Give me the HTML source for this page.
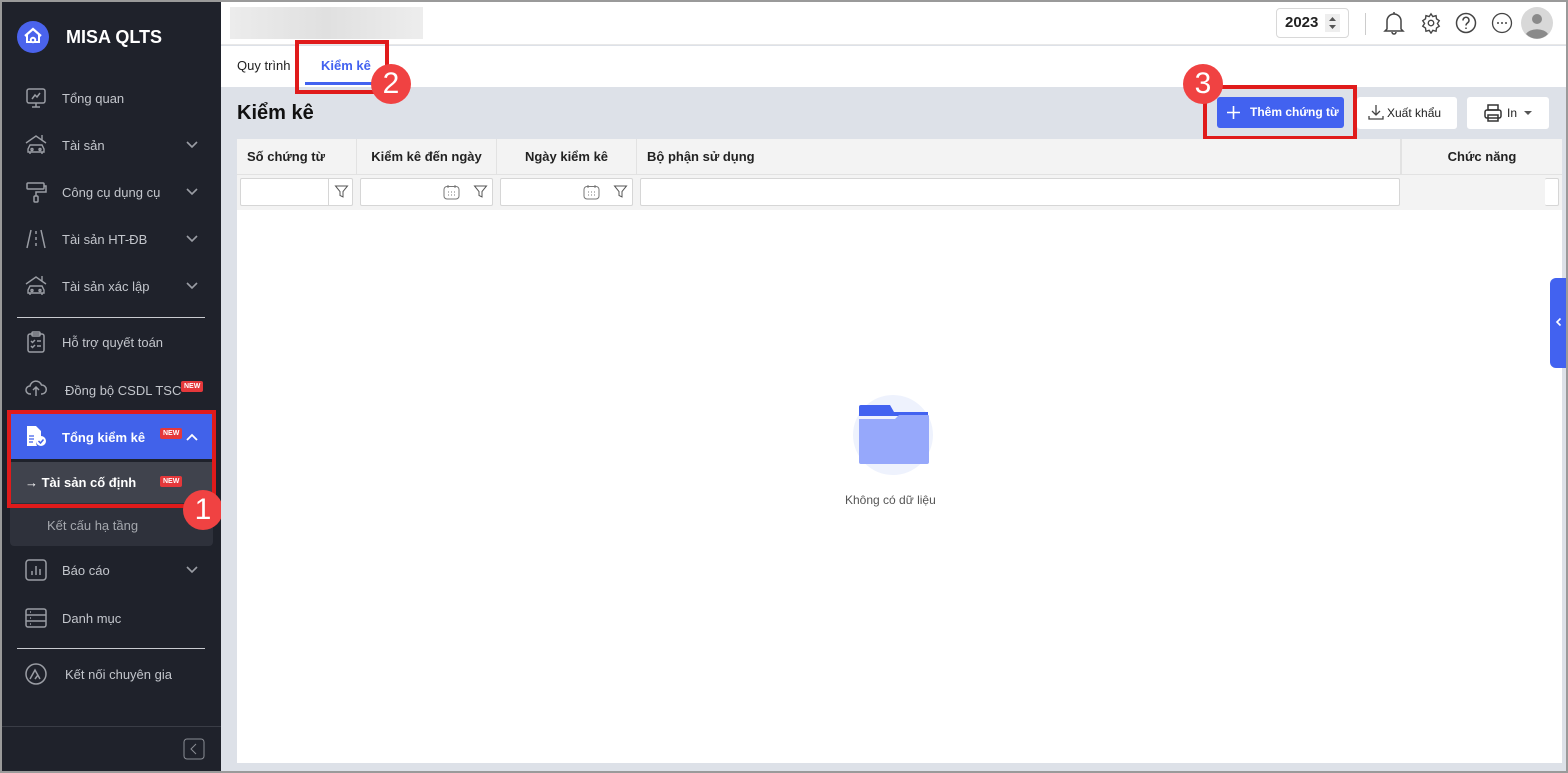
<!DOCTYPE html>
<html><head><meta charset="utf-8"><style>
*{box-sizing:border-box;margin:0;padding:0}
body{width:1568px;height:773px;overflow:hidden;background:#9a9a9a;font-family:"Liberation Sans",Arial,sans-serif;position:relative}
.a{position:absolute}
#sb{left:2px;top:2px;width:219px;height:769px;background:#1f222b}
.mi{position:absolute;left:62px;color:#c3c6cc;font-size:13px;line-height:16px}
.ic{position:absolute;left:24px;width:24px;height:24px}
.chev{position:absolute;left:186px;width:12px;height:8px}
.new{position:absolute;background:#e5383b;color:#fff;font-size:7px;font-weight:bold;padding:1px 3px;border-radius:2px;line-height:9px}
.redbox{position:absolute;border:4px solid #e01b1b}
.num{position:absolute;width:40px;height:40px;border-radius:50%;background:#f04242;color:#fff;font-size:30px;text-align:center;line-height:40px}
.th{position:absolute;top:139px;height:35px;line-height:35px;font-size:13px;font-weight:bold;color:#222;border-right:1px solid #e2e2e2}
.inp{position:absolute;top:178px;height:28px;background:#fff;border:1px solid #d6d6d6;border-radius:2px}
</style></head><body>
<div id="sb" class="a">
</div>
<!-- logo -->
<svg class="a" style="left:17px;top:21px" width="32" height="32" viewBox="0 0 32 32"><circle cx="16" cy="16" r="16" fill="#4a63ec"/><path d="M8 15 L16 8 L24 15" stroke="#fff" stroke-width="2.2" fill="none"/><path d="M10 13v8h12v-8" stroke="#fff" stroke-width="2" fill="none"/><circle cx="16" cy="19" r="3.2" fill="#fff"/><circle cx="16" cy="19" r="1.3" fill="#4a63ec"/></svg>
<div class="a" style="left:66px;top:27px;color:#fff;font-size:18px;font-weight:bold">MISA QLTS</div>

<svg class="ic" style="top:86px" viewBox="0 0 24 24" fill="none" stroke="#9a9da4" stroke-width="1.5"><rect x="3" y="3" width="18" height="14" rx="2"/><path d="M8 13l3-4 2 2 3-4M12 17v4M8 21h8"/></svg>
<div class="mi" style="top:91px">Tổng quan</div>
<svg class="ic" style="top:133px" viewBox="0 0 24 24" fill="none" stroke="#9a9da4" stroke-width="1.4"><path d="M2 10l10-7 10 7M18 2v5"/><path d="M4 19v-3l2-4h12l2 4v3zM6 19v2M18 19v2"/><circle cx="8" cy="16.5" r="1"/><circle cx="16" cy="16.5" r="1"/></svg>
<div class="mi" style="top:138px">Tài sản</div>
<svg class="ic" style="top:180px" viewBox="0 0 24 24" fill="none" stroke="#9a9da4" stroke-width="1.5"><rect x="3" y="3" width="17" height="6" rx="1"/><path d="M20 6h2v6h-10v4"/><rect x="10" y="16" width="4" height="6" rx="1"/></svg>
<div class="mi" style="top:185px">Công cụ dụng cụ</div>
<svg class="ic" style="top:227px" viewBox="0 0 24 24" fill="none" stroke="#9a9da4" stroke-width="1.5"><path d="M7 3L3 21M17 3l4 18M12 4v3M12 10v3M12 16v3"/></svg>
<div class="mi" style="top:232px">Tài sản HT-ĐB</div>
<svg class="ic" style="top:274px" viewBox="0 0 24 24" fill="none" stroke="#9a9da4" stroke-width="1.4"><path d="M2 10l10-7 10 7M18 2v5"/><path d="M4 19v-3l2-4h12l2 4v3zM6 19v2M18 19v2"/><circle cx="8" cy="16.5" r="1"/><circle cx="16" cy="16.5" r="1"/></svg>
<div class="mi" style="top:279px">Tài sản xác lập</div>
<svg class="chev" style="top:141px" viewBox="0 0 12 8"><path d="M1 1l5 5 5-5" stroke="#9a9da4" stroke-width="1.6" fill="none"/></svg>
<svg class="chev" style="top:188px" viewBox="0 0 12 8"><path d="M1 1l5 5 5-5" stroke="#9a9da4" stroke-width="1.6" fill="none"/></svg>
<svg class="chev" style="top:235px" viewBox="0 0 12 8"><path d="M1 1l5 5 5-5" stroke="#9a9da4" stroke-width="1.6" fill="none"/></svg>
<svg class="chev" style="top:282px" viewBox="0 0 12 8"><path d="M1 1l5 5 5-5" stroke="#9a9da4" stroke-width="1.6" fill="none"/></svg>
<div class="a" style="left:17px;top:317px;width:188px;height:1px;background:#c9cbd0"></div>
<svg class="ic" style="top:330px" viewBox="0 0 24 24" fill="none" stroke="#9a9da4" stroke-width="1.5"><rect x="4" y="4" width="16" height="18" rx="2"/><rect x="8" y="2" width="8" height="4" rx="1"/><path d="M7 11l1.5 1.5L11 10M13 11h4M7 16l1.5 1.5L11 15M13 16h4"/></svg>
<div class="mi" style="top:335px">Hỗ trợ quyết toán</div>
<svg class="ic" style="top:376px" viewBox="0 0 24 24" fill="none" stroke="#9a9da4" stroke-width="1.5"><path d="M7 18H6a4 4 0 010-8 6 6 0 0111.5-1A4.5 4.5 0 0118 18h-1M12 20v-9M9 14l3-3 3 3"/></svg>
<div class="mi" style="top:383px;left:65px">Đồng bộ CSDL TSC</div>
<div class="new" style="left:181px;top:381px">NEW</div>
<!-- active -->
<div class="a" style="left:10px;top:414px;width:203px;height:45px;background:#4162ea"></div>
<svg class="a" style="left:25px;top:425px" width="22" height="22" viewBox="0 0 22 22"><path d="M2 1h9l5 5v6a6 6 0 00-4 9H2z" fill="#fff"/><circle cx="16" cy="16" r="5" fill="#fff"/><path d="M13.5 16l2 2 3-3.5" stroke="#4162ea" stroke-width="1.5" fill="none"/><path d="M4 14h5M4 17h4M4 11h5" stroke="#4162ea" stroke-width="1.2"/></svg>
<div class="mi" style="top:430px;color:#fff;font-weight:bold">Tổng kiểm kê</div>
<div class="new" style="left:160px;top:428px">NEW</div>
<svg class="chev" style="top:433px" viewBox="0 0 12 8"><path d="M1 7l5-5 5 5" stroke="#fff" stroke-width="1.8" fill="none"/></svg>
<div class="a" style="left:10px;top:462px;width:203px;height:41px;background:#40434d"></div>
<div class="a" style="left:10px;top:503px;width:203px;height:43px;background:#2e313b;border-radius:0 0 4px 4px"></div>
<div class="mi" style="left:25px;top:475px;color:#fff;font-weight:bold">→ Tài sản cố định</div>
<div class="new" style="left:160px;top:476px">NEW</div>
<div class="mi" style="left:47px;top:518px;color:#a5a8ae">Kết cấu hạ tầng</div>
<div class="redbox" style="left:7px;top:410px;width:209px;height:98px"></div>
<div class="num" style="left:183px;top:490px">1</div>
<svg class="ic" style="top:558px" viewBox="0 0 24 24" fill="none" stroke="#9a9da4" stroke-width="1.5"><rect x="2" y="2" width="20" height="20" rx="3"/><path d="M8 17v-4M12 17V8M16 17v-6"/></svg>
<div class="mi" style="top:563px">Báo cáo</div>
<svg class="chev" style="top:566px" viewBox="0 0 12 8"><path d="M1 1l5 5 5-5" stroke="#9a9da4" stroke-width="1.6" fill="none"/></svg>
<svg class="ic" style="top:606px" viewBox="0 0 24 24" fill="none" stroke="#9a9da4" stroke-width="1.5"><rect x="2" y="3" width="20" height="18" rx="2"/><path d="M2 9h20M2 15h20M6 6h1M6 12h1M6 18h1"/></svg>
<div class="mi" style="top:611px">Danh mục</div>
<div class="a" style="left:17px;top:648px;width:188px;height:1px;background:#c9cbd0"></div>
<svg class="ic" style="top:662px" viewBox="0 0 24 24" fill="none" stroke="#9a9da4" stroke-width="1.5"><circle cx="12" cy="12" r="10"/><path d="M6 17l5-9 5 9M11 17l3-4"/></svg>
<div class="mi" style="top:667px;left:65px">Kết nối chuyên gia</div>
<div class="a" style="left:2px;top:726px;width:219px;height:1px;background:#3a3d46"></div>
<svg class="a" style="left:183px;top:738px" width="22" height="22" viewBox="0 0 22 22"><rect x="1" y="1" width="20" height="20" rx="3" fill="none" stroke="#8a8d94"/><path d="M13 6l-5 5 5 5" stroke="#8a8d94" fill="none"/></svg>

<!-- main -->
<div class="a" style="left:221px;top:2px;width:1345px;height:769px;background:#dde1e8"></div>
<div class="a" style="left:221px;top:2px;width:1345px;height:43px;background:#fff;border-bottom:1px solid #e8e8e8"></div>
<div class="a" style="left:230px;top:7px;width:193px;height:32px;background:linear-gradient(90deg,#ececec,#e0e0e0,#ededed)"></div>
<div class="a" style="left:1276px;top:8px;width:73px;height:30px;border:1px solid #d8d8d8;border-radius:4px;background:#fff"></div>
<div class="a" style="left:1285px;top:14px;font-size:15px;font-weight:bold;color:#222">2023</div>
<div class="a" style="left:1325px;top:14px;width:15px;height:18px;background:#eee"></div>
<svg class="a" style="left:1327px;top:15px" width="11" height="16" viewBox="0 0 11 16"><path d="M2 6l3.5-4 3.5 4zM2 10l3.5 4 3.5-4z" fill="#555"/></svg>
<div class="a" style="left:1365px;top:13px;width:1px;height:22px;background:#ccc"></div>
<svg class="a" style="left:1383px;top:11px" width="22" height="24" viewBox="0 0 22 24" fill="none" stroke="#444" stroke-width="1.5"><path d="M4 18V10a7 7 0 0114 0v8l2 2H2zM9 21a2 2 0 004 0M11 1v2"/></svg>
<svg class="a" style="left:1420px;top:12px" width="22" height="22" viewBox="0 0 24 24" fill="none" stroke="#444" stroke-width="1.5"><circle cx="12" cy="12" r="3"/><path d="M12 2l2 3 3.5-1 .5 3.5 3 2-2 3 2 3-3 2-.5 3.5-3.5-1-2 3-2-3-3.5 1-.5-3.5-3-2 2-3-2-3 3-2 .5-3.5 3.5 1z"/></svg>
<svg class="a" style="left:1455px;top:12px" width="22" height="22" viewBox="0 0 22 22" fill="none" stroke="#444" stroke-width="1.5"><circle cx="11" cy="11" r="9.5"/><path d="M8 8.5a3 3 0 115 2c-1 .8-2 1.2-2 3M11 15.5v1.5"/></svg>
<svg class="a" style="left:1491px;top:12px" width="22" height="22" viewBox="0 0 22 22"><circle cx="11" cy="11" r="9.5" fill="none" stroke="#444" stroke-width="1.3"/><circle cx="7" cy="11" r="1" fill="#444"/><circle cx="11" cy="11" r="1" fill="#444"/><circle cx="15" cy="11" r="1" fill="#444"/></svg>
<svg class="a" style="left:1521px;top:7px" width="32" height="32" viewBox="0 0 32 32"><circle cx="16" cy="16" r="16" fill="#d8d8d8"/><circle cx="16" cy="12" r="5" fill="#8a8a8a"/><path d="M5 27a12 8 0 0122 0 15 15 0 01-22 0z" fill="#8a8a8a"/></svg>
<!-- tabs -->
<div class="a" style="left:221px;top:46px;width:1345px;height:41px;background:#fff"></div>
<div class="a" style="left:237px;top:58px;font-size:13px;color:#222">Quy trình</div>
<div class="a" style="left:321px;top:58px;font-size:13px;color:#4262f0;font-weight:bold">Kiểm kê</div>
<div class="a" style="left:305px;top:82px;width:68px;height:3px;background:#4262f0"></div>
<div class="redbox" style="left:295px;top:40px;width:94px;height:54px"></div>
<div class="num" style="left:371px;top:64px">2</div>
<!-- title -->
<div class="a" style="left:237px;top:102px;font-size:20px;font-weight:bold;color:#111">Kiểm kê</div>
<div class="a" style="left:1217px;top:97px;width:127px;height:31px;background:#4262f0;border-radius:3px;color:#fff;font-size:12px;font-weight:bold;line-height:31px;padding-left:33px">Thêm chứng từ</div>
<svg class="a" style="left:1226px;top:105px" width="15" height="15" viewBox="0 0 15 15"><path d="M7.5 1v13M1 7.5h13" stroke="#fff" stroke-width="1.6"/></svg>
<div class="redbox" style="left:1203px;top:85px;width:154px;height:55px"></div>
<div class="num" style="left:1183px;top:64px">3</div>
<div class="a" style="left:1357px;top:97px;width:100px;height:32px;background:#fff;border-radius:3px;font-size:12px;color:#222;line-height:32px;padding-left:30px">Xuất khẩu</div>
<svg class="a" style="left:1368px;top:104px" width="16" height="17" viewBox="0 0 16 17" fill="none" stroke="#444" stroke-width="1.3"><path d="M8 1v10M4 7l4 4 4-4M1 12v3h14v-3"/></svg>
<div class="a" style="left:1467px;top:97px;width:82px;height:32px;background:#fff;border-radius:3px;font-size:12px;color:#222;line-height:32px;padding-left:40px">In</div>
<svg class="a" style="left:1483px;top:103px" width="20" height="20" viewBox="0 0 20 20" fill="none" stroke="#333" stroke-width="1.5"><rect x="5" y="2" width="10" height="5"/><rect x="2" y="7" width="16" height="8" rx="2"/><rect x="5" y="12" width="10" height="6"/></svg>
<svg class="a" style="left:1523px;top:110px" width="10" height="6" viewBox="0 0 10 6"><path d="M1 1h8l-4 4z" fill="#555"/></svg>
<!-- table -->
<div class="a" style="left:237px;top:139px;width:1325px;height:624px;background:#fff"></div>
<div class="a" style="left:237px;top:139px;width:1325px;height:71px;background:#f3f3f3"></div>
<div class="a" style="left:237px;top:174px;width:1325px;height:1px;background:#e2e2e2"></div>
<div class="th" style="left:237px;width:120px;padding-left:10px">Số chứng từ</div>
<div class="th" style="left:357px;width:140px;text-align:center">Kiểm kê đến ngày</div>
<div class="th" style="left:497px;width:140px;text-align:center">Ngày kiểm kê</div>
<div class="th" style="left:637px;width:764px;padding-left:10px">Bộ phận sử dụng</div>
<div class="th" style="left:1401px;width:161px;text-align:center;border-right:0;border-left:1px solid #e2e2e2">Chức năng</div>
<div class="inp" style="left:240px;width:113px"></div>
<div class="a" style="left:328px;top:179px;width:1px;height:26px;background:#d6d6d6"></div>
<div class="inp" style="left:360px;width:133px"></div>
<div class="inp" style="left:500px;width:133px"></div>
<div class="inp" style="left:640px;width:760px"></div>
<div class="inp" style="left:1545px;width:14px;border-left:0"></div>
<svg class="a" style="left:334px;top:184px" width="15" height="15" viewBox="0 0 15 15"><path d="M1.5 2h12l-4.5 5.5v5.5l-3-1.5v-4z" fill="none" stroke="#555"/></svg>
<svg class="a" style="left:473px;top:184px" width="15" height="15" viewBox="0 0 15 15"><path d="M1.5 2h12l-4.5 5.5v5.5l-3-1.5v-4z" fill="none" stroke="#555"/></svg>
<svg class="a" style="left:613px;top:184px" width="15" height="15" viewBox="0 0 15 15"><path d="M1.5 2h12l-4.5 5.5v5.5l-3-1.5v-4z" fill="none" stroke="#555"/></svg>
<svg class="a" style="left:443px;top:184px" width="17" height="16" viewBox="0 0 17 16"><rect x="1" y="2.5" width="15" height="12.5" rx="3" fill="none" stroke="#777"/><path d="M5 1v3M12 1v3" stroke="#777"/><path d="M5 8h1M8 8h1M11 8h1M5 11h1M8 11h1M11 11h1" stroke="#777"/></svg>
<svg class="a" style="left:583px;top:184px" width="17" height="16" viewBox="0 0 17 16"><rect x="1" y="2.5" width="15" height="12.5" rx="3" fill="none" stroke="#777"/><path d="M5 1v3M12 1v3" stroke="#777"/><path d="M5 8h1M8 8h1M11 8h1M5 11h1M8 11h1M11 11h1" stroke="#777"/></svg>
<!-- empty -->
<div class="a" style="left:853px;top:395px;width:80px;height:80px;border-radius:50%;background:#eef2fd"></div>
<svg class="a" style="left:858px;top:405px" width="72" height="60" viewBox="0 0 72 60"><path d="M1 2a2 2 0 012-2h29l4 7h34v4H1z" fill="#4262f0"/><path d="M1 14h36l4-4h29a1 1 0 011 1v46a2 2 0 01-2 2H3a2 2 0 01-2-2z" fill="#96a8fb"/></svg>
<div class="a" style="left:845px;top:493px;font-size:12px;color:#555">Không có dữ liệu</div>
<div class="a" style="left:1550px;top:278px;width:16px;height:90px;background:#4262f0;border-radius:6px 0 0 6px"></div>
<svg class="a" style="left:1555px;top:317px" width="7" height="10" viewBox="0 0 7 10"><path d="M5.5 1.5L2 5l3.5 3.5" stroke="#fff" stroke-width="1.6" fill="none"/></svg>
</body></html>
